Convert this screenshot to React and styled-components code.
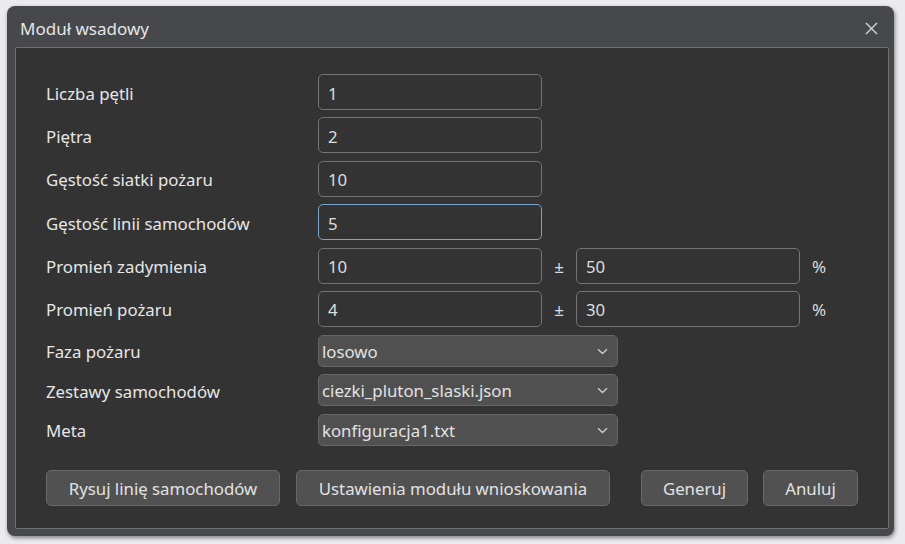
import React from "react";
import styled, { createGlobalStyle } from "styled-components";

const GlobalStyle = createGlobalStyle`
  body {
    margin: 0;
    background: #ebebee;
    font-family: "Noto Sans", "Open Sans", sans-serif;
  }
`;

const Page = styled.div`
  width: 905px;
  height: 544px;
  padding: 6px 0 0 7px;
  box-sizing: border-box;
`;

const Window = styled.div`
  width: 887px;
  height: 530px;
  background: #47484c;
  border-radius: 8px;
  box-shadow: 1px 2px 4px rgba(0, 0, 0, 0.45);
  display: flex;
  flex-direction: column;
  box-sizing: border-box;
  padding: 0 5px 7px 8px;
`;

const TitleBar = styled.div`
  height: 41px;
  display: flex;
  align-items: center;
  justify-content: space-between;
  padding: 3px 10px 0 5px;
  box-sizing: border-box;
  color: #e4e4e4;
  font-size: 17px;
`;

const CloseButton = styled.button`
  background: none;
  border: none;
  padding: 0;
  width: 16px;
  height: 16px;
  display: flex;
  align-items: center;
  justify-content: center;
  cursor: pointer;
`;

const Panel = styled.div`
  flex: 1;
  background: #333333;
  border: 1px solid #707070;
  border-radius: 2px;
  padding: 26px 0 0 30px;
  box-sizing: border-box;
`;

const Form = styled.div`
  display: grid;
  grid-template-columns: 272px 224px 34px 224px 30px;
  row-gap: 7.4px;
  align-items: center;
`;

const Label = styled.div`
  color: #e6e6e6;
  font-size: 16.8px;
  padding-top: 2px;
`;

const Input = styled.input`
  height: 36px;
  box-sizing: border-box;
  background: #333333;
  border: 1.5px solid ${(p) => (p.$focused ? "#7fa4cc" : "#747474")};
  border-radius: 5px;
  color: #dedede;
  font-family: inherit;
  font-size: 16.8px;
  padding: 2px 9px 0;
  outline: none;
  width: 100%;
`;

const Symbol = styled.div`
  color: #dcdcdc;
  font-size: 17px;
  padding-top: 2px;
  text-align: ${(p) => (p.$left ? "left" : "center")};
  padding-left: ${(p) => (p.$left ? "12px" : "0")};
`;

const SelectList = styled.div`
  display: grid;
  grid-template-columns: 272px 300px;
  row-gap: 7.5px;
  align-items: center;
  margin-top: 8px;
`;

const Select = styled.div`
  height: 32px;
  box-sizing: border-box;
  background: #505050;
  border: 1px solid #666666;
  border-radius: 5px;
  color: #e2e2e2;
  font-size: 16.8px;
  display: flex;
  align-items: center;
  justify-content: space-between;
  padding: 1px 9px 0 3px;
`;

const Buttons = styled.div`
  display: flex;
  margin-top: 24px;
`;

const Button = styled.button`
  width: ${(p) => p.$w}px;
  margin-left: ${(p) => p.$ml || 0}px;
  height: 36px;
  background: #515151;
  border: 1px solid #686868;
  border-radius: 5px;
  color: #e2e2e2;
  font-family: inherit;
  font-size: 16.8px;
  padding: 1px 0 0;
  cursor: pointer;
`;

const Chevron = () => (
  <svg width="11" height="7" viewBox="0 0 11 7">
    <path d="M1 1.2 L5.5 5.5 L10 1.2" fill="none" stroke="#c8c8c8" strokeWidth="1.5" />
  </svg>
);

const rows = [
  { label: "Liczba pętli", value: "1" },
  { label: "Piętra", value: "2" },
  { label: "Gęstość siatki pożaru", value: "10" },
  { label: "Gęstość linii samochodów", value: "5", focused: true },
  { label: "Promień zadymienia", value: "10", spread: "50" },
  { label: "Promień pożaru", value: "4", spread: "30" },
];

const selects = [
  { label: "Faza pożaru", value: "losowo" },
  { label: "Zestawy samochodów", value: "ciezki_pluton_slaski.json" },
  { label: "Meta", value: "konfiguracja1.txt" },
];

export default function App() {
  return (
    <>
      <GlobalStyle />
      <Page>
        <Window>
          <TitleBar>
            <span>Moduł wsadowy</span>
            <CloseButton>
              <svg width="13" height="13" viewBox="0 0 13 13">
                <path d="M1 1 L12 12 M12 1 L1 12" stroke="#d4d4d4" strokeWidth="1.4" />
              </svg>
            </CloseButton>
          </TitleBar>
          <Panel>
            <Form>
              {rows.map((r) => (
                <React.Fragment key={r.label}>
                  <Label>{r.label}</Label>
                  <Input defaultValue={r.value} $focused={r.focused} />
                  {r.spread ? (
                    <>
                      <Symbol>±</Symbol>
                      <Input defaultValue={r.spread} />
                      <Symbol $left>%</Symbol>
                    </>
                  ) : (
                    <div style={{ gridColumn: "3 / 6" }} />
                  )}
                </React.Fragment>
              ))}
            </Form>
            <SelectList>
              {selects.map((s) => (
                <React.Fragment key={s.label}>
                  <Label>{s.label}</Label>
                  <Select>
                    <span>{s.value}</span>
                    <Chevron />
                  </Select>
                </React.Fragment>
              ))}
            </SelectList>
            <Buttons>
              <Button $w={234}>Rysuj linię samochodów</Button>
              <Button $w={314} $ml={16}>Ustawienia modułu wnioskowania</Button>
              <Button $w={107} $ml={31}>Generuj</Button>
              <Button $w={95} $ml={15}>Anuluj</Button>
            </Buttons>
          </Panel>
        </Window>
      </Page>
    </>
  );
}
